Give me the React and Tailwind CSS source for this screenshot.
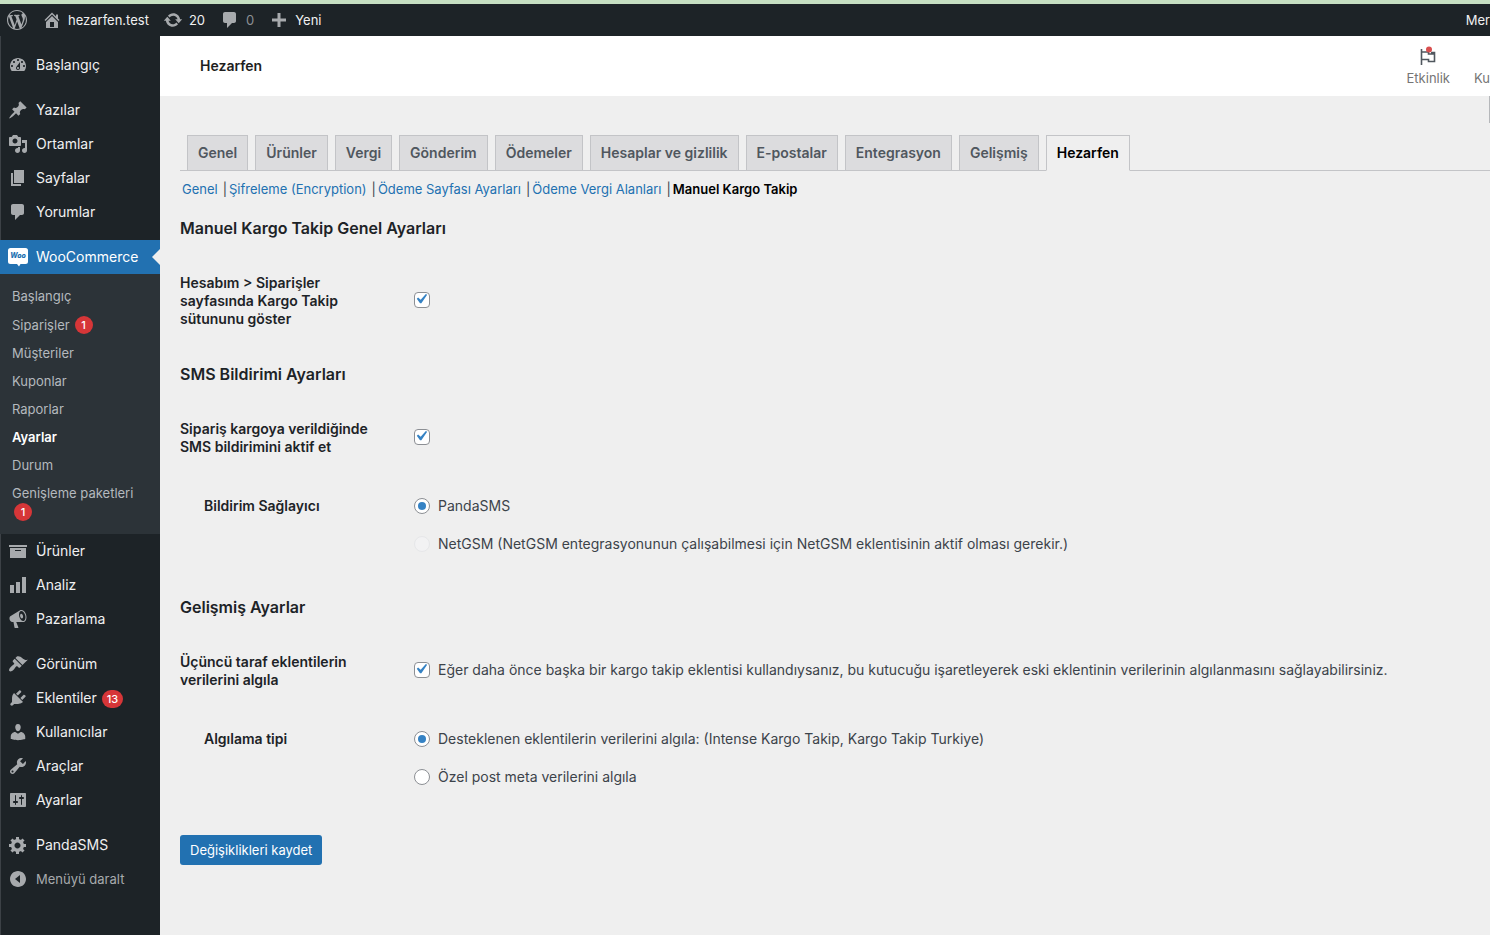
import React, { useState } from 'react';
import clsx from 'clsx';

const icons = {
    wordpress: 'M20 10c0-5.51-4.49-10-10-10C4.48 0 0 4.49 0 10c0 5.52 4.48 10 10 10 5.51 0 10-4.48 10-10zM7.78 15.37L4.37 6.22c.55-.02 1.17-.08 1.17-.08.5-.06.44-1.13-.06-1.11 0 0-1.45.11-2.37.11-.18 0-.37 0-.58-.01C4.12 2.69 6.87 1.11 10 1.11c2.33 0 4.45.87 6.05 2.34-.68-.11-1.65.39-1.65 1.58 0 .74.45 1.36.9 2.1.35.61.55 1.36.55 2.46 0 1.49-1.4 5-1.4 5l-3.03-8.37c.54-.02.82-.17.82-.17.5-.05.44-1.25-.06-1.22 0 0-1.44.12-2.38.12-.87 0-2.33-.12-2.33-.12-.5-.03-.56 1.2-.06 1.22l.92.08 1.26 3.41zM17.41 10c.24-.64.74-1.87.43-4.25.7 1.29 1.05 2.71 1.05 4.25 0 3.29-1.73 6.24-4.4 7.78.97-2.59 1.94-5.2 2.92-7.78zM6.1 18.09C3.12 16.65 1.11 13.53 1.11 10c0-1.3.23-2.48.72-3.59C3.25 10.3 4.67 14.2 6.1 18.09zm4.03-6.63l2.58 6.98c-.86.29-1.76.45-2.71.45-.79 0-1.57-.11-2.29-.33.81-2.38 1.62-4.74 2.42-7.1z',
    home: 'M16 8.5l1.53 1.53-1.06 1.06L10 4.6l-6.47 6.49-1.06-1.06L10 2.5l4 4v-2h2v4zm-6-2.46l6 5.99V18H4v-5.97zM12 17v-5H8v5h4z',
    update: 'M10.2 3.28c3.53 0 6.43 2.61 6.92 6h2.08l-3.5 4-3.5-4h2.32c-.45-1.97-2.21-3.45-4.32-3.45-1.45 0-2.73.71-3.54 1.78L4.95 5.66C6.23 4.2 8.11 3.28 10.2 3.28zm-.4 13.44c-3.52 0-6.43-2.61-6.92-6H.8l3.5-4c1.17 1.33 2.33 2.67 3.5 4H5.48c.45 1.97 2.21 3.45 4.32 3.45 1.45 0 2.73-.71 3.54-1.78l1.71 1.95c-1.28 1.46-3.15 2.38-5.25 2.38z',
    comments: 'M5 2h9c1.1 0 2 .9 2 2v7c0 1.1-.9 2-2 2h-2l-5 5v-5H5c-1.1 0-2-.9-2-2V4c0-1.1.9-2 2-2z',
    plus: 'M17 8.5v3h-5.5V17h-3v-5.5H3v-3h5.5V3h3v5.5z',
    dashboard: 'M3.76 16h12.48c1.1-1.37 1.76-3.11 1.76-5 0-4.42-3.58-8-8-8s-8 3.58-8 8c0 1.89.66 3.63 1.76 5zM10 4c.55 0 1 .45 1 1s-.45 1-1 1-1-.45-1-1 .45-1 1-1zM6 6c.55 0 1 .45 1 1s-.45 1-1 1-1-.45-1-1 .45-1 1-1zm8 0c.55 0 1 .45 1 1s-.45 1-1 1-1-.45-1-1 .45-1 1-1zm-5.37 5.55L12 7v6c0 1.1-.9 2-2 2s-2-.9-2-2c0-.57.24-1.08.63-1.45zM4 10c.55 0 1 .45 1 1s-.45 1-1 1-1-.45-1-1 .45-1 1-1zm12 0c.55 0 1 .45 1 1s-.45 1-1 1-1-.45-1-1 .45-1 1-1zm-5 3c0-.55-.45-1-1-1s-1 .45-1 1 .45 1 1 1 1-.45 1-1z',
    post: 'M10.44 3.02l1.82-1.82 6.36 6.35-1.83 1.82c-1.05-.68-2.48-.57-3.41.36l-.75.75c-.92.93-1.04 2.35-.35 3.41l-1.83 1.82-2.41-2.41-2.8 2.79c-.42.42-3.38 2.71-3.8 2.29s1.86-3.39 2.28-3.81l2.79-2.79L4.1 9.36l1.83-1.82c1.05.69 2.48.57 3.4-.36l.75-.75c.93-.92 1.05-2.35.36-3.41z',
    media: 'M13 11V4c0-.55-.45-1-1-1h-1.67L9 1H5L3.67 3H2c-.55 0-1 .45-1 1v7c0 .55.45 1 1 1h10c.55 0 1-.45 1-1zM7 4.5c1.38 0 2.5 1.12 2.5 2.5S8.38 9.5 7 9.5 4.5 8.38 4.5 7 5.62 4.5 7 4.5zM14 6h5v10.5c0 1.38-1.12 2.5-2.5 2.5S14 17.88 14 16.5s1.12-2.5 2.5-2.5c.17 0 .34.02.5.05V9h-3V6zm-4 8.05V13h2v3.5c0 1.38-1.12 2.5-2.5 2.5S7 17.88 7 16.5 8.12 14 9.5 14c.17 0 .34.02.5.05z',
    page: 'M6 15V2h10v13H6zm-1 1h8v2H3V5h2v11z',
    archive: 'M19 4v2H1V4h18zM2 7h16v10H2V7zm11 3V9H7v1h6z',
    chart: 'M18 18V2h-4v16h4zm-6 0V7H8v11h4zm-6 0v-8H2v8h4z',
    megaphone: 'M18.15 5.94c.46 1.62.38 3.22-.02 4.48-.42 1.28-1.26 2.18-2.3 2.48-.16.06-.26.06-.4.06-.06.02-.12.02-.18.02-.06.02-.14.02-.22.02h-6.8l2.22 5.5c.02.14-.06.26-.14.34-.08.1-.24.16-.34.16H6.95c-.1 0-.26-.06-.34-.16-.08-.08-.16-.2-.14-.34l-1-5.5H4.25l-.02-.02c-.5.06-1.08-.18-1.54-.62s-.88-1.08-1.06-1.88c-.24-.8-.2-1.56-.02-2.2.18-.62.58-1.08 1.06-1.3l.02-.02 9-5.4c.1-.06.18-.1.24-.16.06-.04.14-.08.24-.12.16-.08.28-.12.5-.18 1.04-.3 2.24.1 3.22.98s1.84 2.24 2.26 3.86zm-2.58 5.98h-.02c.4-.1.74-.34 1.04-.7.58-.7.86-1.76.86-3.04 0-.64-.1-1.3-.28-1.98-.34-1.36-1.02-2.5-1.78-3.24s-1.68-1.1-2.46-.88c-.82.22-1.4.96-1.7 2-.32 1.04-.28 2.36.06 3.72.38 1.36 1 2.5 1.8 3.24.78.74 1.62 1.1 2.48.88zm-2.54-7.08c.22-.04.42-.02.62.04.38.16.76.48 1.02 1s.42 1.2.42 1.78c0 .3-.04.56-.12.8-.18.48-.44.84-.86.94-.34.1-.8-.06-1.14-.4s-.64-.86-.78-1.5c-.18-.62-.12-1.24.02-1.72s.48-.84.82-.94z',
    appearance: 'M14.48 11.06L7.41 3.99l1.5-1.5c.5-.56 2.3-.47 3.51.32 1.21.8 1.43 1.28 2.91 2.1 1.18.64 2.45 1.26 4.45.85zm-.71.71L6.7 4.7 4.93 6.47c-.39.39-.39 1.02 0 1.41l1.06 1.06c.39.39.39 1.03 0 1.42-.6.6-1.43 1.11-2.21 1.69-.35.26-.7.53-1.01.84C1.43 14.23.4 16.08 1.4 17.07c.99 1 2.84-.03 4.18-1.36.31-.31.58-.66.85-1.02.57-.78 1.08-1.61 1.69-2.21.39-.39 1.02-.39 1.41 0l1.06 1.06c.39.39 1.02.39 1.41 0z',
    plugins: 'M13.11 4.36L9.87 7.6 8 5.73l3.24-3.24c.35-.34 1.05-.2 1.56.32.52.51.66 1.21.31 1.55zm-8 1.77l.91-1.12 9.01 9.01-1.19.84c-.71.71-2.63 1.16-3.82 1.16H6.14L4.9 17.26c-.59.59-1.54.59-2.12 0-.59-.58-.59-1.53 0-2.12l1.24-1.24v-3.88c0-1.13.4-3.19 1.09-3.89zm7.26 3.97l3.24-3.24c.34-.35 1.04-.21 1.55.31.52.51.66 1.21.31 1.55l-3.24 3.25z',
    users: 'M10 9.25c-2.27 0-2.73-3.44-2.73-3.44C7 4.02 7.82 2 9.97 2c2.16 0 2.98 2.02 2.71 3.81 0 0-.41 3.44-2.68 3.44zm0 2.57L12.72 10c2.39 0 4.52 2.33 4.52 4.53v2.49s-3.65 1.13-7.24 1.13c-3.65 0-7.24-1.13-7.24-1.13v-2.49c0-2.25 1.94-4.48 4.47-4.48z',
    tools: 'M16.68 9.77c-1.34 1.34-3.3 1.67-4.95.99l-5.41 6.52c-.99.99-2.59.99-3.58 0s-.99-2.59 0-3.57l6.52-5.42c-.68-1.65-.35-3.61.99-4.95 1.28-1.28 3.12-1.62 4.72-1.06l-2.89 2.89 2.82 2.82 2.86-2.87c.53 1.58.18 3.39-1.08 4.65zM3.81 16.21c.4.39 1.04.39 1.43 0 .4-.4.4-1.04 0-1.43-.39-.4-1.03-.4-1.43 0-.39.39-.39 1.03 0 1.43z',
    settings: 'M18 16V4c0-.55-.45-1-1-1H3c-.55 0-1 .45-1 1v12c0 .55.45 1 1 1h14c.55 0 1-.45 1-1zM8 11h1c.55 0 1 .45 1 1s-.45 1-1 1H8v1.5c0 .28-.22.5-.5.5s-.5-.22-.5-.5V13H6c-.55 0-1-.45-1-1s.45-1 1-1h1V5.5c0-.28.22-.5.5-.5s.5.22.5.5V11zm5-2h-1c-.55 0-1-.45-1-1s.45-1 1-1h1V5.5c0-.28.22-.5.5-.5s.5.22.5.5V7h1c.55 0 1 .45 1 1s-.45 1-1 1h-1v5.5c0 .28-.22.5-.5.5s-.5-.22-.5-.5V9z',
    generic: 'M18 12h-2.18c-.17.7-.44 1.35-.81 1.93l1.54 1.54-2.1 2.1-1.54-1.54c-.58.36-1.23.63-1.91.79V19H8v-2.18c-.68-.16-1.33-.43-1.91-.79l-1.54 1.54-2.12-2.12 1.54-1.54c-.36-.58-.63-1.23-.79-1.91H1V9.03h2.17c.16-.7.44-1.35.8-1.94L2.43 5.55l2.1-2.1 1.54 1.54c.58-.37 1.24-.64 1.93-.81V2h3v2.18c.68.16 1.33.43 1.91.79l1.54-1.54 2.12 2.12-1.54 1.54c.36.59.64 1.24.8 1.94H18V12zm-8.5 1.5c1.66 0 3-1.34 3-3s-1.34-3-3-3-3 1.34-3 3 1.34 3 3 3z',
    collapse: 'M10 2c4.42 0 8 3.58 8 8s-3.58 8-8 8-8-3.58-8-8 3.58-8 8-8zm2 12V6l-5 4z',
};

const menuGroups = [
    [{ label: 'Başlangıç', icon: 'dashboard' }],
    [
        { label: 'Yazılar', icon: 'post' },
        { label: 'Ortamlar', icon: 'media' },
        { label: 'Sayfalar', icon: 'page' },
        { label: 'Yorumlar', icon: 'comments' },
    ],
    [
        { label: 'WooCommerce', icon: 'woo', current: true },
        { label: 'Ürünler', icon: 'archive' },
        { label: 'Analiz', icon: 'chart' },
        { label: 'Pazarlama', icon: 'megaphone' },
    ],
    [
        { label: 'Görünüm', icon: 'appearance' },
        { label: 'Eklentiler', icon: 'plugins', count: 13 },
        { label: 'Kullanıcılar', icon: 'users' },
        { label: 'Araçlar', icon: 'tools' },
        { label: 'Ayarlar', icon: 'settings' },
    ],
    [{ label: 'PandaSMS', icon: 'generic' }],
];

const wooItems = [
    { label: 'Başlangıç' },
    { label: 'Siparişler', count: 1 },
    { label: 'Müşteriler' },
    { label: 'Kuponlar' },
    { label: 'Raporlar' },
    { label: 'Ayarlar', current: true },
    { label: 'Durum' },
    { label: 'Genişleme paketleri', count: 1 },
];

const tabs = ['Genel', 'Ürünler', 'Vergi', 'Gönderim', 'Ödemeler', 'Hesaplar ve gizlilik', 'E-postalar', 'Entegrasyon', 'Gelişmiş', 'Hezarfen'];

const sections = ['Genel', 'Şifreleme (Encryption)', 'Ödeme Sayfası Ayarları', 'Ödeme Vergi Alanları', 'Manuel Kargo Takip'];

function Icon({ name, className }) {
    return (
        <svg viewBox="0 0 20 20" className={clsx('shrink-0', className)} fill="currentColor" fillRule="evenodd" aria-hidden="true">
            <path d={icons[name]} />
        </svg>
    );
}

function WooIcon() {
    return (
        <svg viewBox="0 0 20 20" className="size-5 shrink-0" aria-hidden="true">
            <path d="M2.5 1h15A2.500 2.500 0 0 1 20 3.500v11a2.500 2.500 0 0 1-2.500 2.500h-5L11 19.500 9 17H2.500A2.500 2.500 0 0 1 0 14.500v-11A2.500 2.500 0 0 1 2.500 1z" fill="#fff" />
            <text x="10" y="11" textAnchor="middle" fontSize="7" fontWeight="800" fontStyle="italic" fill="#2271b1">Woo</text>
        </svg>
    );
}

function Badge({ children }) {
    return (
        <span className="mt-px ml-[2px] inline-flex h-[18px] min-w-[18px] items-center justify-center rounded-full bg-[#d63638] px-[5px] text-[11px] font-medium text-white">
            {children}
        </span>
    );
}

function Checkbox({ id, defaultChecked, children }) {
    return (
        <div className="flex items-center gap-2 pb-[2px]">
            <span className="grid size-4 shrink-0 place-items-center">
                <input
                    id={id}
                    type="checkbox"
                    defaultChecked={defaultChecked}
                    className="peer col-start-1 row-start-1 size-4 appearance-none rounded-[4px] border border-[#8c8f94] bg-white"
                />
                <svg viewBox="3 3 16 16" className="pointer-events-none col-start-1 row-start-1 hidden size-4 peer-checked:block" aria-hidden="true">
                    <path d="M14.830 4.890l1.340.940-5.810 8.380H9.020L5.780 9.670l1.340-1.250 2.570 2.400z" fill="#3582c4" />
                </svg>
            </span>
            {children && <label htmlFor={id}>{children}</label>}
        </div>
    );
}

function Radio({ name, children, ...props }) {
    return (
        <label className="flex items-center gap-2 leading-6">
            <span className="grid size-4 shrink-0 place-items-center">
                <input
                    type="radio"
                    name={name}
                    className="peer col-start-1 row-start-1 size-4 appearance-none rounded-full border border-[#8c8f94] bg-white disabled:border-[#e6e7e9] disabled:bg-[#f2f2f3]"
                    {...props}
                />
                <span className="pointer-events-none col-start-1 row-start-1 hidden size-2 rounded-full bg-[#3582c4] peer-checked:block" />
            </span>
            <span>{children}</span>
        </label>
    );
}

function CheckRow({ id, label, children }) {
    return (
        <div className="mt-[34px] flex items-center">
            <label htmlFor={id} className="mr-[34px] w-[200px] shrink-0 font-semibold leading-[18px] text-[#1d2327]">{label}</label>
            <Checkbox id={id} defaultChecked>{children}</Checkbox>
        </div>
    );
}

function RadioRow({ label, children }) {
    return (
        <div role="radiogroup" aria-label={label} className="mt-[38px] mb-[39px] flex items-start">
            <span className="mr-[34px] w-[200px] shrink-0 pl-6 font-semibold leading-6 text-[#1d2327]">{label}</span>
            <div className="flex flex-col gap-[14px]">{children}</div>
        </div>
    );
}

function AdminBar() {
    return (
        <header className="flex h-9 items-center overflow-hidden border-t-4 border-[#c6dfc2] bg-[#1d2327] pl-[7px] text-[13px] text-[#f0f0f1]">
            <a href="#about" aria-label="WordPress" className="mr-[15px]">
                <Icon name="wordpress" className="size-5 text-[#a7aaad]" />
            </a>
            <a href="#site" className="mr-[14px] flex items-center gap-[6px]">
                <Icon name="home" className="size-5 text-[#a7aaad]" />
                hezarfen.test
            </a>
            <a href="#updates" className="mr-[15px] flex items-center gap-[6px]">
                <Icon name="update" className="size-5 text-[#a7aaad]" />
                20
            </a>
            <a href="#comments" className="mr-[15px] flex items-center gap-[6px] text-[#8c8f94]">
                <Icon name="comments" className="size-5 text-[#a7aaad]" />
                0
            </a>
            <a href="#new" className="flex items-center gap-[6px]">
                <Icon name="plus" className="size-5 text-[#a7aaad]" />
                Yeni
            </a>
            <a href="#account" className="ml-auto">Mer</a>
        </header>
    );
}

function WooMenu() {
    return (
        <ul className="bg-[#2c3338] py-2 text-[13px] leading-[18px] text-[#b4b9be]">
            {wooItems.map((item) => (
                <li key={item.label}>
                    <a href="#woo" className={clsx('flex flex-wrap items-center gap-x-[3px] px-3 py-[5px]', item.current && 'font-semibold text-white')}>
                        {item.label}
                        {item.count && <Badge>{item.count}</Badge>}
                    </a>
                </li>
            ))}
        </ul>
    );
}

function Sidebar() {
    return (
        <nav aria-label="Ana menü" className="w-40 shrink-0 bg-[#1d2327] pt-3 text-[14px] text-[#f0f0f1] shadow-[inset_1px_0_#3c4146]">
            <div className="flex flex-col gap-[11px]">
                {menuGroups.map((group, i) => (
                    <ul key={i}>
                        {group.map((item) => (
                            <li key={item.label}>
                                <a href="#menu" className={clsx('flex h-[34px] items-center gap-2 pl-2', item.current && 'bg-[#2271b1] text-white')}>
                                    {item.icon === 'woo' ? <WooIcon /> : <Icon name={item.icon} className="size-5 text-[#a7aaad]" />}
                                    <span className="flex items-center gap-[3px]">
                                        {item.label}
                                        {item.count && <Badge>{item.count}</Badge>}
                                    </span>
                                    {item.current && (
                                        <svg viewBox="0 0 8 16" className="ml-auto h-4 w-2" fill="#efefef" aria-hidden="true">
                                            <path d="M8 0v16L0 8z" />
                                        </svg>
                                    )}
                                </a>
                                {item.current && <WooMenu />}
                            </li>
                        ))}
                    </ul>
                ))}
            </div>
            <button type="button" className="flex h-[34px] items-center gap-2 pl-2 text-[13px] text-[#a7aaad]">
                <Icon name="collapse" className="size-5" />
                Menüyü daralt
            </button>
        </nav>
    );
}

function PageHeader() {
    return (
        <div className="flex h-[60px] items-center overflow-hidden bg-white pl-10">
            <h1 className="text-[14px] font-semibold text-[#1e1e1e]">Hezarfen</h1>
            <div className="ml-auto flex items-end gap-6 text-[13px] leading-4 text-[#757575]">
                <button type="button" className="flex flex-col items-center gap-1">
                    <svg viewBox="0 0 20 20" className="size-5" fill="none" aria-hidden="true">
                        <path d="M3.500 3v16M3.500 6h7v2h6M3.500 13.500h7v2h6V6.500H13" stroke="#50575e" strokeWidth="1.600" />
                        <circle cx="11" cy="3.500" r="3" fill="#d94f4f" />
                    </svg>
                    Etkinlik
                </button>
                <button type="button" className="w-4">Ku</button>
            </div>
        </div>
    );
}

export default function App() {
    const [tab, setTab] = useState('Hezarfen');

    return (
        <div className="flex min-h-screen flex-col overflow-x-hidden bg-[#efefef] font-['Inter',sans-serif] text-[14px] leading-5 text-[#3c434a]">
            <AdminBar />
            <div className="flex grow">
                <Sidebar />
                <main className="min-w-0 grow">
                    <PageHeader />
                    <div className="ml-auto h-[27px] w-px bg-[#b5b7ba]" />

                    <form className="pl-5" onSubmit={(e) => e.preventDefault()}>
                        <nav aria-label="Ayar sekmeleri" className="mt-3 flex gap-[7px] border-b border-[#c3c4c7] pl-[7px]">
                            {tabs.map((name) => (
                                <button
                                    key={name}
                                    type="button"
                                    onClick={() => setTab(name)}
                                    className={clsx(
                                        '-mb-px h-9 border px-[10px] font-semibold whitespace-nowrap',
                                        name === tab ? 'border-[#c3c4c7] border-b-[#efefef] bg-[#efefef] text-black' : 'border-[#c3c4c7] bg-[#dcdcde] text-[#50575e]'
                                    )}
                                >
                                    {name}
                                </button>
                            ))}
                        </nav>

                        <ul className="mt-2 flex pl-[2px] text-[13px]">
                            {sections.map((name, i) => {
                                const last = i === sections.length - 1;
                                return (
                                    <li key={name} className="flex">
                                        <a href="#section" className={last ? 'font-semibold text-black' : 'text-[#2271b1]'}>{name}</a>
                                        {!last && <span className="pr-[2px] pl-[5px]">|</span>}
                                    </li>
                                );
                            })}
                        </ul>

                        <h2 className="mt-[17px] text-[16px] leading-6 font-semibold text-[#1d2327]">Manuel Kargo Takip Genel Ayarları</h2>
                        <CheckRow id="show_column" label="Hesabım > Siparişler sayfasında Kargo Takip sütununu göster" />

                        <h2 className="mt-[34px] text-[16px] leading-6 font-semibold text-[#1d2327]">SMS Bildirimi Ayarları</h2>
                        <CheckRow id="enable_sms" label="Sipariş kargoya verildiğinde SMS bildirimini aktif et" />
                        <RadioRow label="Bildirim Sağlayıcı">
                            <Radio name="provider" defaultChecked>PandaSMS</Radio>
                            <Radio name="provider" disabled>NetGSM (NetGSM entegrasyonunun çalışabilmesi için NetGSM eklentisinin aktif olması gerekir.)</Radio>
                        </RadioRow>

                        <h2 className="text-[16px] leading-6 font-semibold text-[#1d2327]">Gelişmiş Ayarlar</h2>
                        <CheckRow id="recognize_data" label="Üçüncü taraf eklentilerin verilerini algıla">
                            Eğer daha önce başka bir kargo takip eklentisi kullandıysanız, bu kutucuğu işaretleyerek eski eklentinin verilerinin algılanmasını sağlayabilirsiniz.
                        </CheckRow>
                        <RadioRow label="Algılama tipi">
                            <Radio name="recognition" defaultChecked>Desteklenen eklentilerin verilerini algıla: (Intense Kargo Takip, Kargo Takip Turkiye)</Radio>
                            <Radio name="recognition">Özel post meta verilerini algıla</Radio>
                        </RadioRow>

                        <button type="submit" className="mt-[7px] h-[30px] rounded-[3px] bg-[#2271b1] px-[10px] text-[13px] text-white">
                            Değişiklikleri kaydet
                        </button>
                    </form>
                </main>
            </div>
        </div>
    );
}
